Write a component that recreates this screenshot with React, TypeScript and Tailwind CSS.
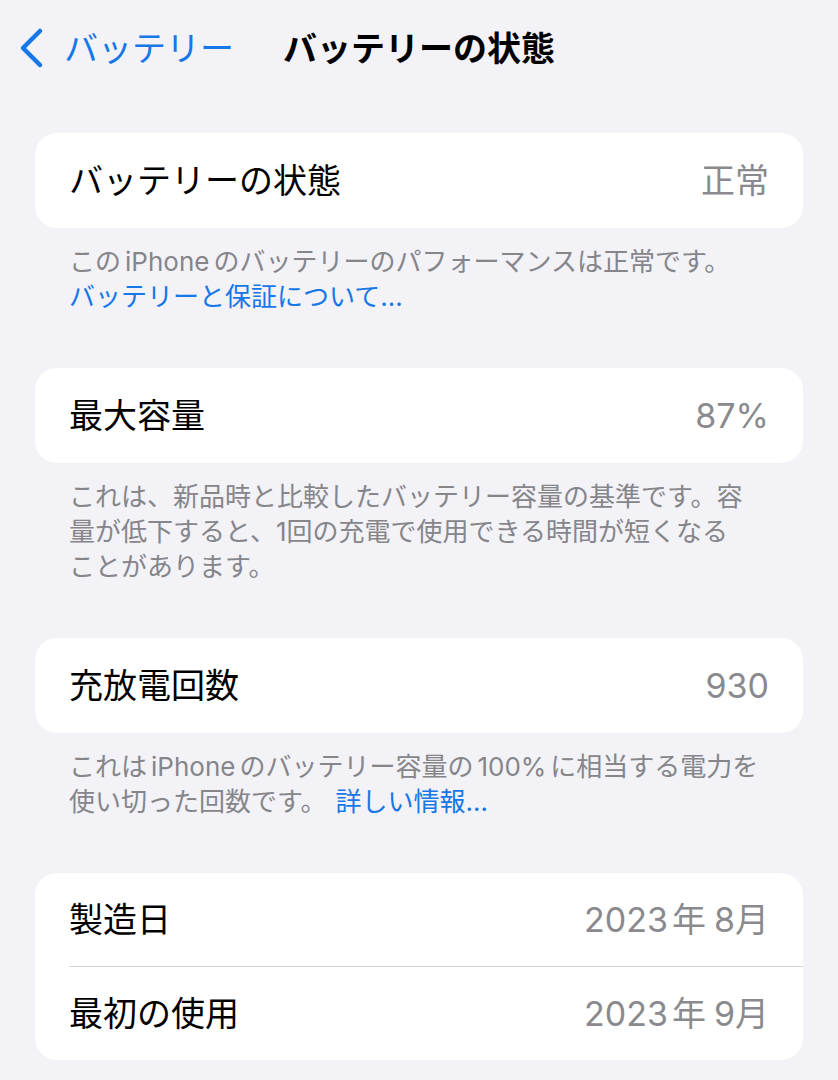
import React from "react";

const Card = ({ children }: { children: React.ReactNode }) => (
  <div className="bg-white rounded-[22px] overflow-hidden">{children}</div>
);

const Row = ({ label, value }: { label: string; value: React.ReactNode }) => (
  <div className="h-[95px] px-[34px] flex flex-row items-center justify-between text-[34px]">
    <span className="text-black">{label}</span>
    <span className="text-[#8a8a8e]">{value}</span>
  </div>
);

const Footer = ({ children }: { children: React.ReactNode }) => (
  <div className="px-[34px] pt-[16px] pb-[54px] text-[26px] leading-[35px] text-[#85858a]">
    {children}
  </div>
);

const Latin = ({ children }: { children: React.ReactNode }) => (
  <span className="mx-[4px]">{children}</span>
);

const DateValue = ({ month }: { month: string }) => (
  <span>
    2023<span className="ml-[4px]">年</span>
    <span className="ml-[8px]">{month}</span>月
  </span>
);

const App = () => {
  return (
    <div className="min-h-screen w-full bg-[#f2f2f7] font-['Inter','Noto_Sans_CJK_JP',sans-serif] antialiased">
      <div className="grid grid-cols-[1fr_auto_1fr] h-[96px] items-center">
        <div className="flex flex-row items-center pl-[18px]">
          <svg width="26" height="42" viewBox="0 0 26 42" fill="none">
            <path
              d="M22 4 L5 21 L22 38"
              stroke="#1677e8"
              strokeWidth="4.5"
              strokeLinecap="round"
              strokeLinejoin="round"
            />
          </svg>
          <span className="ml-[20px] text-[34px] text-[#1677e8]">バッテリー</span>
        </div>
        <h1 className="text-[34px] font-bold text-black">バッテリーの状態</h1>
        <div></div>
      </div>

      <div className="px-[35px] pt-[37px]">
        <Card>
          <Row label="バッテリーの状態" value="正常" />
        </Card>
        <Footer>
          この<Latin>iPhone</Latin>のバッテリーのパフォーマンスは正常です。
          <br />
          <span className="text-[#1677e8]">バッテリーと保証について…</span>
        </Footer>

        <Card>
          <Row label="最大容量" value="87%" />
        </Card>
        <Footer>
          これは、新品時と比較したバッテリー容量の基準です。容
          <br />
          量が低下すると、1回の充電で使用できる時間が短くなる
          <br />
          ことがあります。
        </Footer>

        <Card>
          <Row label="充放電回数" value="930" />
        </Card>
        <Footer>
          これは<Latin>iPhone</Latin>のバッテリー容量の<Latin>100%</Latin>に相当する電力を
          <br />
          使い切った回数です。
          <span className="ml-[9px] text-[#1677e8]">詳しい情報…</span>
        </Footer>

        <Card>
          <div className="h-[93px] px-[34px] flex flex-row items-center justify-between text-[34px]">
            <span className="text-black">製造日</span>
            <span className="text-[#8a8a8e]">
              <DateValue month="8" />
            </span>
          </div>
          <div className="ml-[34px] h-px bg-[#d4d4d8]"></div>
          <div className="h-[93px] px-[34px] flex flex-row items-center justify-between text-[34px]">
            <span className="text-black">最初の使用</span>
            <span className="text-[#8a8a8e]">
              <DateValue month="9" />
            </span>
          </div>
        </Card>
        <div className="h-[40px]"></div>
      </div>
    </div>
  );
};

export default App;
